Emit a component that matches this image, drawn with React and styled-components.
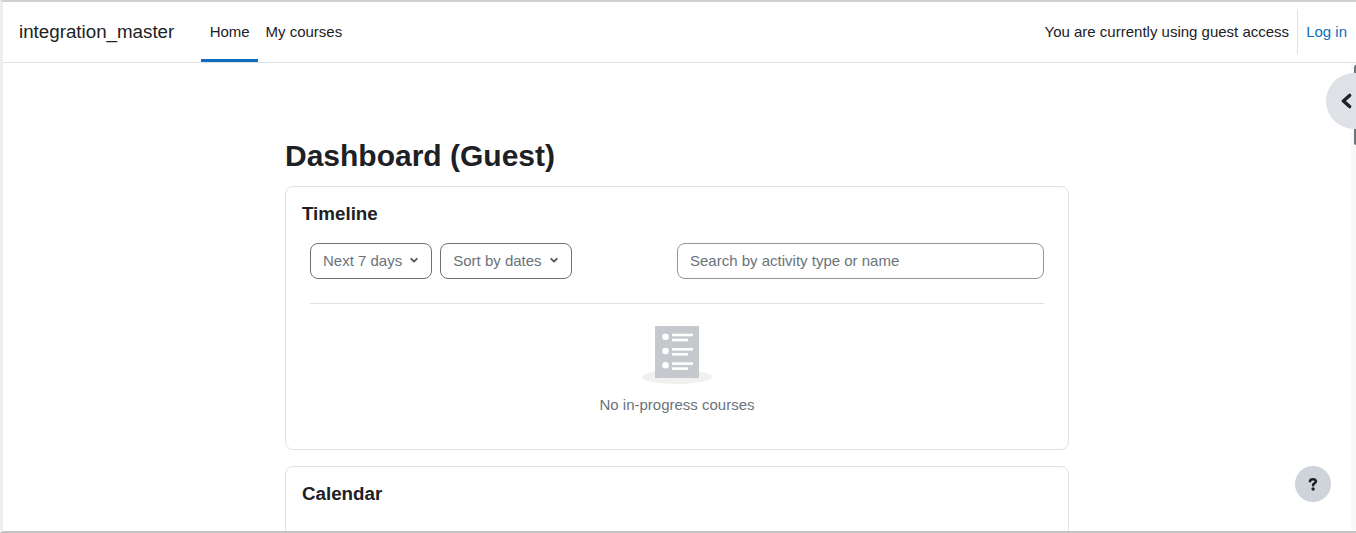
import React from 'react';
import styled, { createGlobalStyle } from 'styled-components';

const Global = createGlobalStyle`
  html, body { margin: 0; padding: 0; background: #fff; height: 100%; overflow: hidden; }
  body { font-family: "Liberation Sans", Arial, sans-serif; font-size: 15px; color: #1d2125; }
  * { box-sizing: border-box; }
`;

const Frame = styled.div`
  position: relative;
  width: 1356px;
  height: 533px;
  overflow: hidden;
  background: #fff;
  border-top: 2px solid #cfcfcf;
  border-left: 3px solid #efefef;
  border-bottom: 2px solid #c4c4c4;
`;

const Navbar = styled.header`
  display: flex;
  align-items: stretch;
  height: 61px;
  padding: 0 9px 0 16px;
  border-bottom: 1px solid #dee2e6;
  background: #fff;
`;

const Brand = styled.div`
  display: flex;
  align-items: center;
  font-size: 18.75px;
  margin-right: 27px;
  padding-bottom: 1px;
`;

const NavList = styled.nav`
  display: flex;
  align-items: stretch;
`;

const NavItem = styled.a`
  display: flex;
  align-items: center;
  padding: 2px 8.4px 0;
  border-bottom: 3px solid ${p => (p.$active ? '#0f6cbf' : 'transparent')};
  color: #1d2125;
  &:last-child { padding-left: 7.4px; }
`;

const Spacer = styled.div`
  flex: 1;
`;

const UserArea = styled.div`
  display: flex;
  align-items: center;
`;

const GuestText = styled.span`
  padding: 0 8px 2px 0;
`;

const LoginLink = styled.a`
  display: flex;
  align-items: center;
  height: 45px;
  margin-bottom: 2px;
  padding-left: 8px;
  border-left: 1px solid #dee2e6;
  color: #0f6cbf;
`;

const Main = styled.main`
  width: 784px;
  margin-left: 282px;
`;

const Heading = styled.h1`
  margin: 0;
  padding-top: 75px;
  height: 123px;
  font-size: 30px;
  line-height: 36px;
  font-weight: 700;
  color: #1d2125;
`;

const Card = styled.section`
  border: 1px solid #dee2e6;
  border-radius: 8px;
  padding: 16px;
  margin-bottom: 16px;
  background: #fff;
  height: ${p => p.$height};
`;

const CardTitle = styled.h2`
  margin: 0;
  font-size: 18.75px;
  line-height: 22px;
  font-weight: 700;
`;

const Filters = styled.div`
  display: flex;
  gap: 8px;
  margin: 18px 8px 0;
`;

const Select = styled.button`
  display: flex;
  align-items: center;
  gap: 7px;
  height: 36px;
  padding: 0 12px 2px 12px;
  border: 1px solid #6a737b;
  border-radius: 8px;
  background: #fff;
  color: #6a737b;
  font: inherit;
`;

const Search = styled.div`
  display: flex;
  align-items: center;
  width: 367px;
  height: 36px;
  margin-left: auto;
  padding: 0 12px 2px;
  border: 1px solid #8f959e;
  border-radius: 8px;
  color: #6a737b;
`;

const Divider = styled.hr`
  margin: 24px 8px 0;
  border: 0;
  border-top: 1px solid #dee2e6;
`;

const Empty = styled.div`
  display: flex;
  flex-direction: column;
  align-items: center;
  margin-top: 21px;
  color: #6a737b;
`;

const EmptyText = styled.p`
  margin: 9px 0 0;
  line-height: 22px;
`;

const RightRail = styled.div`
  position: absolute;
  top: 61px;
  right: 0;
  bottom: 0;
  width: 5px;
  background: #f8f9fa;
`;

const ScrollThumb = styled.div`
  position: absolute;
  top: 63px;
  right: 0;
  width: 2px;
  height: 80px;
  border-radius: 2px 0 0 2px;
  background: #6a737b;
`;

const DrawerToggle = styled.button`
  position: absolute;
  top: 71px;
  right: 0;
  width: 30px;
  height: 56px;
  padding: 0 0 0 14px;
  display: flex;
  align-items: center;
  border: 0;
  border-radius: 28px 0 0 28px;
  background: #dee2e6;
  color: #1d2125;
`;

const HelpButton = styled.button`
  position: absolute;
  left: 1292px;
  top: 464px;
  width: 36px;
  height: 36px;
  display: flex;
  align-items: center;
  justify-content: center;
  border: 0;
  padding: 0;
  border-radius: 50%;
  background: #ced4da;
  color: #1d2125;
`;

const Caret = () => (
  <svg width="10" height="10" viewBox="0 0 10 10" fill="none">
    <path d="M2.2 3.8 5 6.6l2.8-2.8" stroke="#4f575e" strokeWidth="1.8" strokeLinecap="round" strokeLinejoin="round" />
  </svg>
);

const EmptyIcon = () => (
  <svg width="70" height="60" viewBox="0 0 70 60">
    <ellipse cx="35" cy="52" rx="35" ry="7" fill="#f0f0f0" />
    <rect x="13" y="1" width="44" height="52" fill="#c5c8cc" />
    {[11.7, 26, 40.3].map(y => (
      <g key={y} fill="#fff">
        <circle cx="23.5" cy={y} r="3.3" />
        <rect x="30" y={y - 3} width="21" height="2.6" />
        <rect x="30" y={y + 2} width="16" height="2.6" />
      </g>
    ))}
  </svg>
);

export default function App() {
  return (
    <Frame>
      <Global />
      <Navbar>
        <Brand>integration_master</Brand>
        <NavList>
          <NavItem $active>Home</NavItem>
          <NavItem>My courses</NavItem>
        </NavList>
        <Spacer />
        <UserArea>
          <GuestText>You are currently using guest access</GuestText>
          <LoginLink>Log in</LoginLink>
        </UserArea>
      </Navbar>
      <Main>
        <Heading>Dashboard (Guest)</Heading>
        <Card $height="264px">
          <CardTitle>Timeline</CardTitle>
          <Filters>
            <Select>Next 7 days <Caret /></Select>
            <Select>Sort by dates <Caret /></Select>
            <Search>Search by activity type or name</Search>
          </Filters>
          <Divider />
          <Empty>
            <EmptyIcon />
            <EmptyText>No in-progress courses</EmptyText>
          </Empty>
        </Card>
        <Card $height="200px">
          <CardTitle>Calendar</CardTitle>
        </Card>
      </Main>
      <RightRail />
      <ScrollThumb />
      <DrawerToggle aria-label="Open drawer">
        <svg width="12" height="16" viewBox="0 0 12 16" fill="none">
          <path d="M9.6 2.4 3.4 8l6.2 5.6" stroke="#1d2125" strokeWidth="3.4" strokeLinecap="round" strokeLinejoin="round" />
        </svg>
      </DrawerToggle>
      <HelpButton aria-label="Help">
        <svg width="12" height="16" viewBox="0 0 12 16" fill="none">
          <path d="M3 5.2C3.2 3.8 4.4 3.2 6 3.2c1.7 0 2.9.8 2.9 2.1 0 1.1-.7 1.5-1.5 2-.8.5-1.3.9-1.3 2" stroke="#1d2125" strokeWidth="2.6" strokeLinecap="round" />
          <circle cx="6.1" cy="13" r="1.7" fill="#1d2125" />
        </svg>
      </HelpButton>
    </Frame>
  );
}
